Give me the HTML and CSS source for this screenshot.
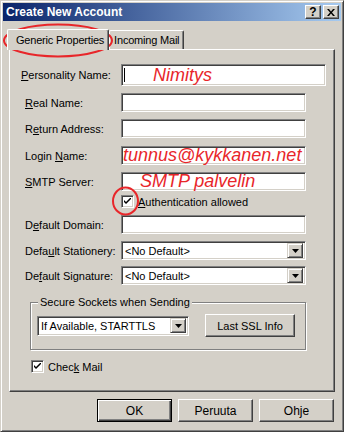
FILE: index.html
```html
<!DOCTYPE html>
<html lang="en">
<head>
    <meta charset="UTF-8">
    <title>Create New Account</title>
    <link rel="stylesheet" href="styles.css">
</head>
<body>

    <div class="window">
        <div class="titlebar">
            <span class="title">Create New Account</span>
            <div class="title-buttons">
                <span class="tbtn">?</span>
                <span class="tbtn close">
                    <svg width="8" height="7" viewBox="0 0 8 7"><path d="M0 0h2l2 2.5 2-2.5h2l-3 3.5 3 3.5h-2l-2-2.5-2 2.5h-2l3-3.5z" fill="#000"/></svg>
                </span>
            </div>
        </div>

        <div class="tabs">
            <div class="tab active">Generic Properties</div>
            <div class="tab">Incoming Mail</div>
        </div>

        <div class="panel">
            <div class="row row-first">
                <span class="label lab-wide"><u>P</u>ersonality Name:</span>
                <div class="field field-big"><span class="caret"></span><span class="note note-first">Nimitys</span></div>
            </div>
            <div class="row">
                <span class="label"><u>R</u>eal Name:</span>
                <div class="field"></div>
            </div>
            <div class="row">
                <span class="label">R<u>e</u>turn Address:</span>
                <div class="field"></div>
            </div>
            <div class="row row-login">
                <span class="label">Login <u>N</u>ame:</span>
                <div class="field"><span class="note note-login">tunnus@kykkanen.net</span></div>
            </div>
            <div class="row">
                <span class="label"><u>S</u>MTP Server:</span>
                <div class="field"><span class="note note-smtp">SMTP palvelin</span></div>
            </div>
            <div class="check-row auth">
                <span class="checkbox"><svg width="7" height="7" viewBox="0 0 7 7"><path d="M0 2l2 2 5-5v2l-5 5-2-2z" fill="#000"/></svg></span>
                <span class="check-label"><u>A</u>uthentication allowed</span>
            </div>
            <div class="row">
                <span class="label">D<u>e</u>fault Domain:</span>
                <div class="field"></div>
            </div>
            <div class="row">
                <span class="label">Defa<u>u</u>lt Stationery:</span>
                <div class="field select"><span class="value">&lt;No Default&gt;</span><span class="drop"><svg width="7" height="4" viewBox="0 0 7 4"><path d="M0 0h7l-3.5 4z" fill="#000"/></svg></span></div>
            </div>
            <div class="row row-sig">
                <span class="label">De<u>f</u>ault Signature:</span>
                <div class="field select"><span class="value">&lt;No Default&gt;</span><span class="drop"><svg width="7" height="4" viewBox="0 0 7 4"><path d="M0 0h7l-3.5 4z" fill="#000"/></svg></span></div>
            </div>

            <div class="group">
                <div class="group-title">Secure Sockets when Sending</div>
                <div class="group-row">
                    <div class="field select ssl"><span class="value">If Available, STARTTLS</span><span class="drop"><svg width="7" height="4" viewBox="0 0 7 4"><path d="M0 0h7l-3.5 4z" fill="#000"/></svg></span></div>
                    <span class="button ssl-btn">Last SSL Info</span>
                </div>
            </div>

            <div class="check-row mail">
                <span class="checkbox"><svg width="7" height="7" viewBox="0 0 7 7"><path d="M0 2l2 2 5-5v2l-5 5-2-2z" fill="#000"/></svg></span>
                <span class="check-label">Chec<u>k</u> Mail</span>
            </div>
        </div>

        <div class="footer">
            <span class="button default">OK</span>
            <span class="button">Peruuta</span>
            <span class="button">Ohje</span>
        </div>

        <!-- punaiset merkinnät -->
        <svg class="marks" width="344" height="432">
            <ellipse cx="57" cy="39.5" rx="54" ry="16" fill="none" stroke="#e8262a" stroke-width="2"/>
            <ellipse cx="124.5" cy="200" rx="12.5" ry="13.5" fill="none" stroke="#e8262a" stroke-width="2"/>
        </svg>
    </div>

</body>
</html>
```

FILE: styles.css
```css
body {
    margin: 0;
    font-family: "Liberation Sans", Arial, sans-serif;
    font-size: 11px;
    color: #000;
}
.window {
    position: relative;
    width: 344px;
    height: 432px;
    box-sizing: border-box;
    background-color: #d4d0c8;
    border: 1px solid;
    border-color: #d4d0c8 #404040 #404040 #d4d0c8;
    box-shadow: inset 1px 1px #fff, inset -1px -1px #808080;
    padding: 2px;
}
.titlebar {
    height: 18px;
    display: flex;
    align-items: center;
    justify-content: space-between;
    background: linear-gradient(to right, #0a246a, #a6caf0);
    padding: 0 2px 0 3px;
}
.title {
    color: #fff;
    font-weight: bold;
    font-size: 12px;
}
.title-buttons {
    display: flex;
    gap: 2px;
}
.tbtn {
    width: 16px;
    height: 14px;
    box-sizing: border-box;
    display: flex;
    align-items: center;
    justify-content: center;
    background-color: #d4d0c8;
    border: 1px solid;
    border-color: #fff #404040 #404040 #fff;
    box-shadow: inset -1px -1px #808080;
    font-weight: bold;
    font-size: 12px;
}
.tabs {
    display: flex;
    align-items: flex-end;
    height: 23px;
    margin-top: 5px;
    padding-left: 4px;
}
.tab {
    height: 18px;
    padding: 0 4px;
    display: flex;
    align-items: center;
    background-color: #d4d0c8;
    border: 1px solid;
    border-bottom: none;
    border-color: #fff #404040 #404040 #fff;
    box-shadow: inset -1px 0 #808080;
    border-radius: 2px 2px 0 0;
    white-space: nowrap;
    letter-spacing: -0.2px;
}
.tab.active {
    height: 20px;
    padding: 0 4px 0 8px;
    margin-bottom: -1px;
    position: relative;
    z-index: 1;
}
.panel {
    height: 343px;
    margin: 0 6px;
    border: 1px solid;
    border-color: #fff #404040 #404040 #fff;
    box-shadow: inset -1px -1px #808080;
    padding-top: 14px;
    box-sizing: border-box;
}
.row {
    display: flex;
    align-items: center;
    height: 19px;
    margin-bottom: 7px;
}
.row-first {
    height: 22px;
}
.row-login {
    margin-top: 8px;
}
.row-sig {
    margin-top: -1px;
}
.label {
    width: 96px;
    padding-left: 15px;
    white-space: nowrap;
}
.lab-wide {
    padding-left: 11px;
    width: 100px;
}
.field {
    position: relative;
    width: 185px;
    height: 19px;
    box-sizing: border-box;
    background-color: #fff;
    border: 1px solid;
    border-color: #808080 #fff #fff #808080;
    box-shadow: inset 1px 1px #404040, inset -1px -1px #d4d0c8;
    display: flex;
    align-items: center;
}
.field-big {
    width: 205px;
    height: 22px;
}
.caret {
    width: 1px;
    height: 14px;
    background-color: #000;
    margin-left: 2px;
}
.note {
    color: #e8262a;
    font-style: italic;
    font-size: 18px;
    white-space: nowrap;
}
.note-first {
    margin-left: 28px;
}
.note-login {
    margin-left: 1px;
}
.note-smtp {
    margin-left: 18px;
}
.check-row {
    display: flex;
    align-items: center;
    gap: 4px;
    height: 13px;
}
.auth {
    margin: -3px 0 7px 111px;
}
.checkbox {
    width: 13px;
    height: 13px;
    box-sizing: border-box;
    background-color: #fff;
    border: 1px solid;
    border-color: #808080 #fff #fff #808080;
    box-shadow: inset 1px 1px #404040, inset -1px -1px #d4d0c8;
    display: flex;
    align-items: center;
    justify-content: center;
    flex-shrink: 0;
}
.select {
    justify-content: space-between;
}
.value {
    padding-left: 3px;
    white-space: nowrap;
}
.drop {
    width: 16px;
    height: 15px;
    box-sizing: border-box;
    margin-right: 2px;
    background-color: #d4d0c8;
    border: 1px solid;
    border-color: #d4d0c8 #404040 #404040 #d4d0c8;
    box-shadow: inset 1px 1px #fff, inset -1px -1px #808080;
    display: flex;
    align-items: center;
    justify-content: center;
}
.group {
    margin: 17px 28px 0 20px;
    padding: 0 10px 0 6px;
    border: 1px solid #808080;
    box-shadow: 1px 1px #fff, inset 1px 1px #fff;
    height: 48px;
    box-sizing: border-box;
}
.group-title {
    width: fit-content;
    height: 13px;
    line-height: 13px;
    margin: -7px 0 0 1px;
    padding: 0 2px;
    background-color: #d4d0c8;
}
.group-row {
    display: flex;
    align-items: center;
    justify-content: space-between;
    margin-top: 5px;
}
.ssl {
    width: 152px;
    height: 20px;
}
.button {
    display: flex;
    align-items: center;
    justify-content: center;
    box-sizing: border-box;
    background-color: #d4d0c8;
    border: 1px solid;
    border-color: #fff #404040 #404040 #fff;
    box-shadow: inset -1px -1px #808080;
    font-size: 12px;
    width: 75px;
    height: 23px;
}
.ssl-btn {
    width: 90px;
    height: 23px;
    font-size: 11px;
}
.mail {
    margin: 10px 0 0 21px;
}
.footer {
    display: flex;
    justify-content: flex-end;
    gap: 6px;
    margin: 7px 7px 0 0;
}
.button.default {
    border: 1px solid #000;
    box-shadow: inset 1px 1px #fff, inset -1px -1px #404040, inset -2px -2px #808080;
}
.marks {
    position: absolute;
    left: 0;
    top: 0;
    pointer-events: none;
}
```
